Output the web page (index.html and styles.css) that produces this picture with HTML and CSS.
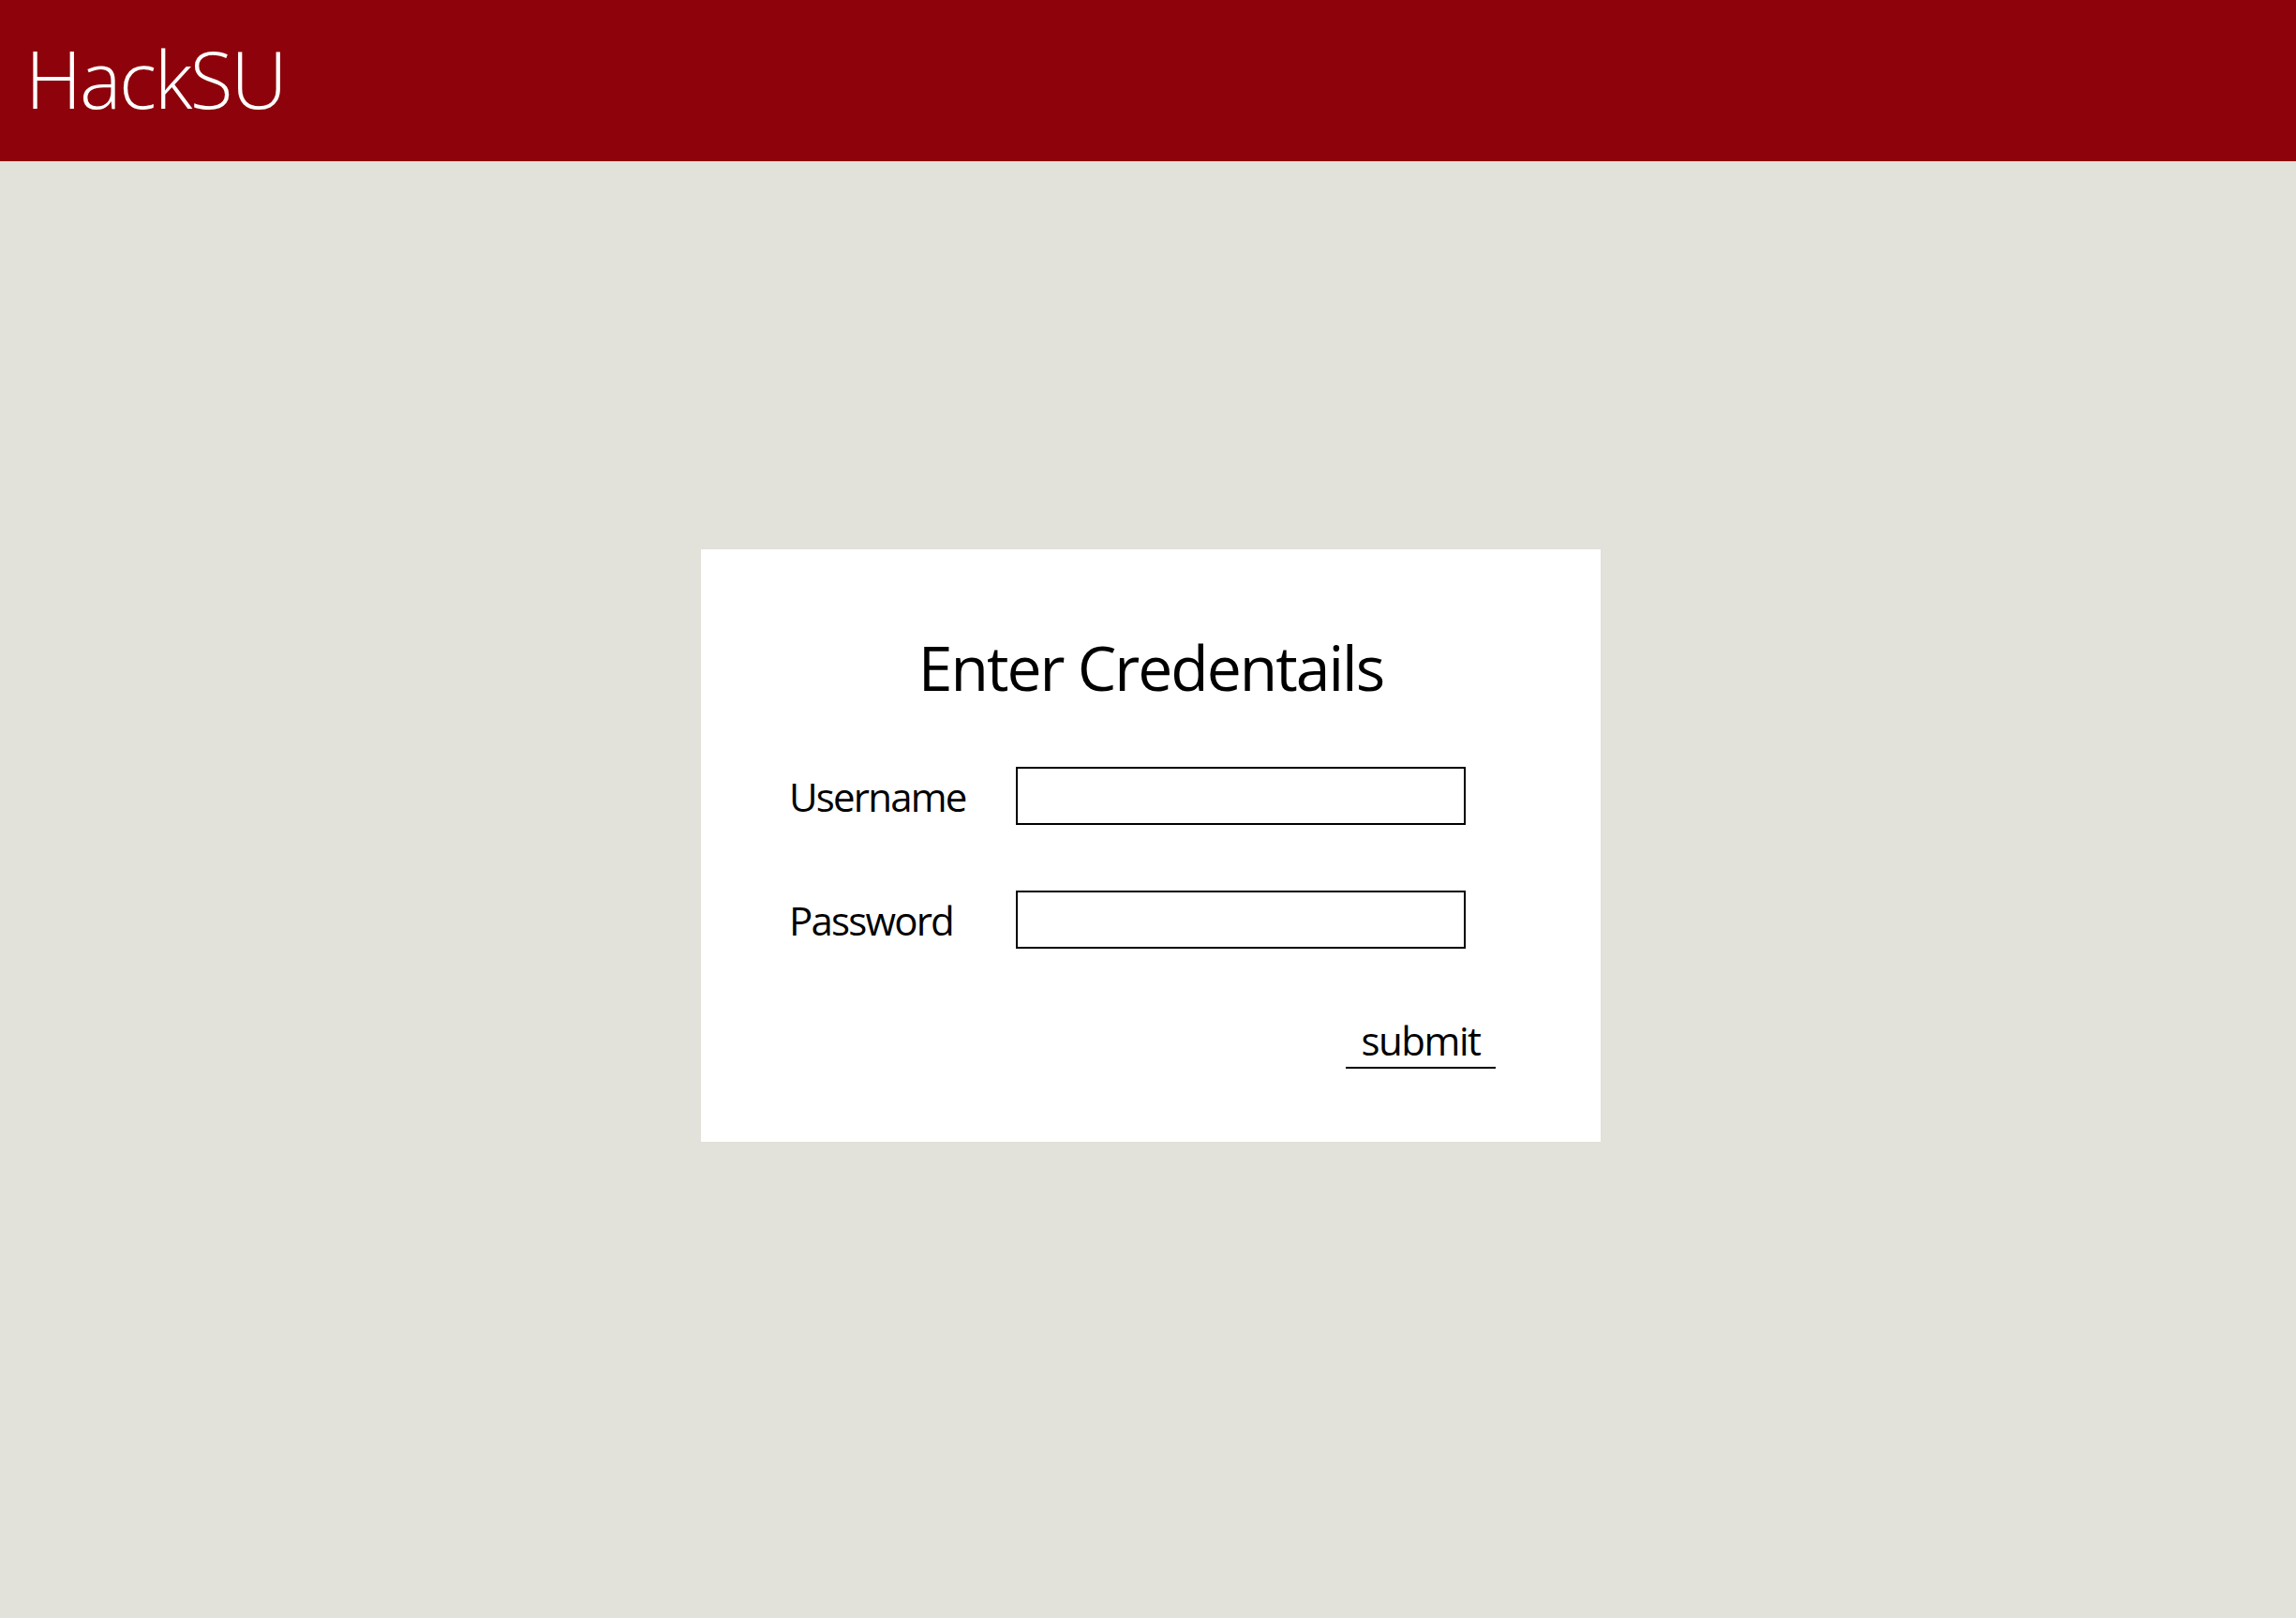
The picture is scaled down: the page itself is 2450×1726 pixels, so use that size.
FILE: index.html
```html
<!DOCTYPE html>
<html>
<head>
<meta charset="utf-8">
<title>HackSU</title>
<link rel="stylesheet" href="styles.css">
</head>
<body>
<header class="topbar">
  <div class="brand">HackSU</div>
</header>
<main class="stage">
  <section class="card">
    <h1 class="title">Enter Credentails</h1>
    <form class="form">
      <div class="row">
        <label class="label">Username</label>
        <input class="field" type="text">
      </div>
      <div class="row">
        <label class="label">Password</label>
        <input class="field" type="password">
      </div>
      <div class="actions">
        <button class="submit" type="button">submit</button>
      </div>
    </form>
  </section>
</main>
</body>
</html>
```

FILE: styles.css
```css
html, body {
  margin: 0;
  padding: 0;
}
body {
  background: #e2e1da;
  font-family: "Open Sans", "Liberation Sans", sans-serif;
  color: #000;
  min-height: 1726px;
}
.topbar {
  height: 172px;
  background: #8e030b;
  display: flex;
  align-items: center;
  padding-left: 27px;
  box-sizing: border-box;
}
.brand {
  color: #fff;
  font-size: 84px;
  font-weight: 300;
  letter-spacing: -2.4px;
  line-height: 1;
  margin-top: -4px;
}
.stage {
  display: flex;
  justify-content: center;
  padding-top: 414px;
  padding-left: 6px;
}
.card {
  width: 960px;
  height: 632px;
  box-sizing: border-box;
  background: #fff;
  padding: 80px 0 0 0;
}
.title {
  margin: 0 0 62px 0;
  text-align: center;
  font-weight: 400;
  font-size: 66px;
  letter-spacing: -2px;
  line-height: 90px;
}
.form {
  display: flex;
  flex-direction: column;
  padding: 0 112px 0 94px;
}
.row {
  display: flex;
  align-items: center;
  height: 62px;
  margin-bottom: 70px;
}
.label {
  width: 242px;
  font-size: 42px;
  letter-spacing: -1.8px;
}
.field {
  width: 480px;
  height: 62px;
  box-sizing: border-box;
  border: 2px solid #000;
  margin: 0;
  padding: 0 10px;
  background: #fff;
  font-size: 32px;
  font-family: inherit;
}
.actions {
  display: flex;
  justify-content: flex-end;
}
.submit {
  width: 160px;
  background: none;
  border: none;
  border-bottom: 2px solid #000;
  padding: 2px 0 2px 0;
  font-family: inherit;
  font-size: 42px;
  letter-spacing: -1.5px;
  line-height: 52px;
  color: #000;
}
```
